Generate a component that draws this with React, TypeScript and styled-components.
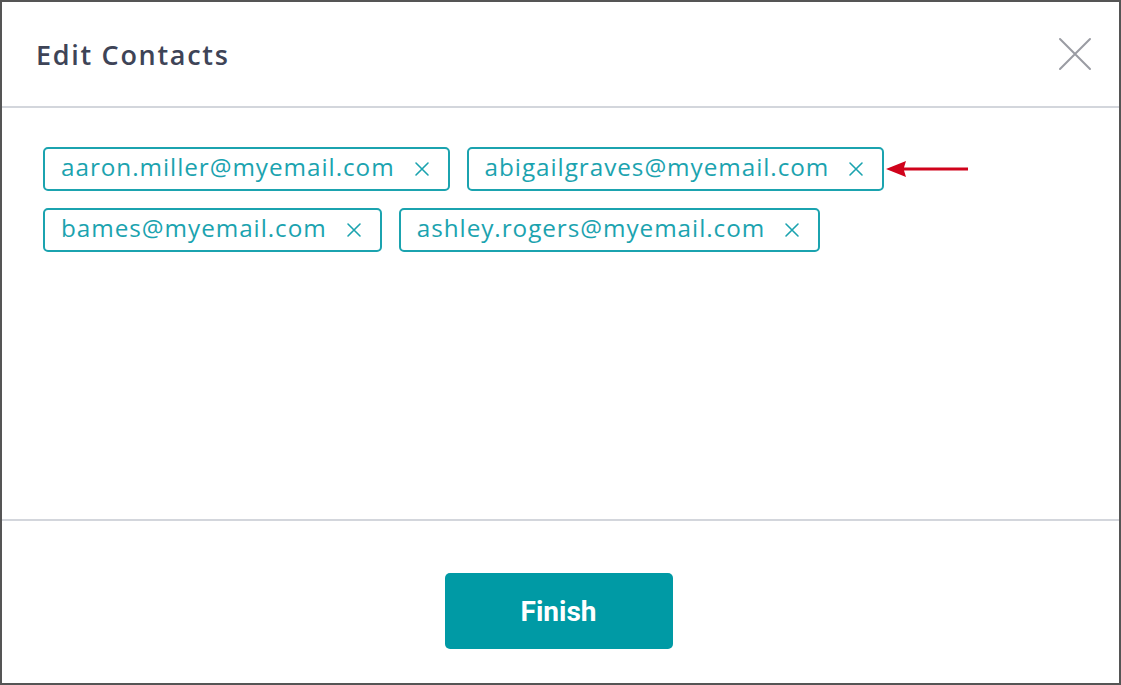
import React from 'react';
import styled, { createGlobalStyle } from 'styled-components';

const GlobalStyle = createGlobalStyle`
  html, body {
    margin: 0;
    padding: 0;
    background: #ffffff;
  }
  * {
    box-sizing: border-box;
  }
`;

const Frame = styled.div`
  width: 1121px;
  height: 685px;
  border: 2px solid #555555;
  background: #ffffff;
  display: flex;
  flex-direction: column;
  font-family: 'Open Sans', Lato, sans-serif;
`;

const Header = styled.div`
  height: 106px;
  flex-shrink: 0;
  display: flex;
  align-items: center;
  justify-content: space-between;
  padding: 0 26px 0 34px;
  border-bottom: 2px solid #d3d6dc;
`;

const Title = styled.h1`
  margin: 0;
  font-size: 27px;
  font-weight: 600;
  color: #3e4457;
  letter-spacing: 1.7px;
`;

const CloseButton = styled.button`
  width: 36px;
  height: 36px;
  padding: 0;
  border: none;
  background: none;
  display: flex;
  align-items: center;
  justify-content: center;
  cursor: pointer;
`;

const Body = styled.div`
  flex: 1;
  padding: 39px 40px 0 41px;
  border-bottom: 2px solid #d3d6dc;
`;

const ChipList = styled.div`
  display: flex;
  flex-wrap: wrap;
  gap: 17px 17px;
  width: 900px;
`;

const Chip = styled.div`
  position: relative;
  height: 44px;
  display: flex;
  align-items: center;
  gap: 18px;
  padding: 0 17px 0 16px;
  border: 2px solid #1ba3af;
  border-radius: 5px;
  color: #1ba3af;
  font-size: 24.3px;
  letter-spacing: 0.95px;
`;

const ChipText = styled.span`
  line-height: 1;
  padding-bottom: 4px;
`;

const RemoveButton = styled.button`
  width: 18px;
  height: 18px;
  padding: 0;
  border: none;
  background: none;
  display: flex;
  align-items: center;
  justify-content: center;
  cursor: pointer;
`;

const Pointer = styled.svg`
  position: absolute;
  left: 100%;
  top: 50%;
  margin-left: 4px;
  transform: translateY(-50%);
`;

const Footer = styled.div`
  height: 162px;
  flex-shrink: 0;
  display: flex;
  justify-content: center;
  padding-top: 52px;
  padding-right: 4px;
`;

const FinishButton = styled.button`
  width: 228px;
  height: 76px;
  border: none;
  border-radius: 5px;
  background: #009aa5;
  color: #ffffff;
  font-family: Roboto, 'Open Sans', sans-serif;
  font-size: 28px;
  font-weight: 700;
  cursor: pointer;
`;

const contacts = [
  { email: 'aaron.miller@myemail.com' },
  { email: 'abigailgraves@myemail.com', marked: true },
  { email: 'bames@myemail.com' },
  { email: 'ashley.rogers@myemail.com' },
];

function SmallX() {
  return (
    <svg width="16" height="16" viewBox="0 0 16 16">
      <path d="M2 2 L14 14 M14 2 L2 14" stroke="#1ba3af" strokeWidth="1.6" strokeLinecap="round" />
    </svg>
  );
}

function App() {
  return (
    <>
      <GlobalStyle />
      <Frame>
        <Header>
          <Title>Edit Contacts</Title>
          <CloseButton aria-label="Close">
            <svg width="34" height="34" viewBox="0 0 34 34">
              <path d="M2 2 L32 32 M32 2 L2 32" stroke="#9a9ca3" strokeWidth="2" strokeLinecap="round" />
            </svg>
          </CloseButton>
        </Header>
        <Body>
          <ChipList>
            {contacts.map((c) => (
              <Chip key={c.email}>
                <ChipText>{c.email}</ChipText>
                <RemoveButton aria-label={`Remove ${c.email}`}>
                  <SmallX />
                </RemoveButton>
                {c.marked && (
                  <Pointer width="82" height="18" viewBox="0 0 82 18">
                    <path d="M0 9 L20 1 L18 7.5 L82 7.5 L82 10.5 L18 10.5 L20 17 Z" fill="#d0021b" />
                  </Pointer>
                )}
              </Chip>
            ))}
          </ChipList>
        </Body>
        <Footer>
          <FinishButton>Finish</FinishButton>
        </Footer>
      </Frame>
    </>
  );
}

export default App;
